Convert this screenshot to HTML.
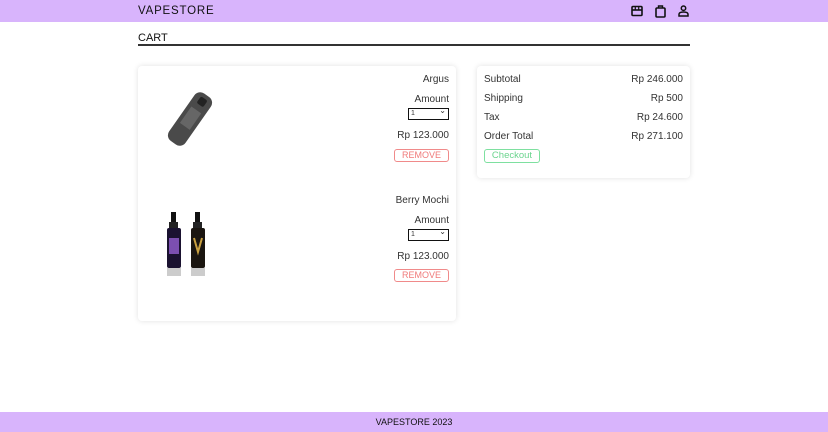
<!DOCTYPE html>
<html><head><style>
*{margin:0;padding:0;box-sizing:border-box}
body{width:828px;height:432px;background:#fff;font-family:"Liberation Sans",sans-serif;color:#333;position:relative;overflow:hidden;font-size:10px}
.hdr{position:absolute;left:0;top:0;width:828px;height:22px;background:#d8b4fc}
.logo{position:absolute;left:138px;top:5px;font-size:11.5px;letter-spacing:.8px;color:#111}
.ic{position:absolute;top:5px}
.cart{position:absolute;left:138px;top:32px;font-size:11px;color:#111}
.line{position:absolute;left:138px;top:44px;width:552px;height:1.5px;background:#333}
.card{position:absolute;background:#fff;border-radius:4px;box-shadow:0 0 6px rgba(0,0,0,.12)}
.r{position:absolute;right:7px;text-align:right}
.sel{position:absolute;right:7px;width:41px;height:12px;border:1px solid #111;font-size:7px;padding-left:2px;line-height:10px}
.sel:after{content:"⌄";position:absolute;right:2px;top:-3px;font-size:8px}
.rm{position:absolute;right:7px;width:55px;height:13px;border:1px solid #f08a8a;border-radius:3px;color:#f07a7a;font-size:9px;text-align:center;line-height:11px}
.row{position:absolute;left:7px;right:7px;display:flex;justify-content:space-between}
.co{position:absolute;left:7px;top:83px;width:56px;height:14px;border:1px solid #7ee0a0;border-radius:3px;color:#6bd48e;font-size:9.5px;text-align:center;line-height:12px}
.ftr{position:absolute;left:0;top:412px;width:828px;height:20px;background:#d8b4fc;text-align:center;font-size:9px;line-height:20px;color:#111}
</style></head><body>
<div class="hdr">
<div class="logo">VAPESTORE</div>
<svg class="ic" style="left:631px" width="12" height="12" viewBox="0 0 12 12"><rect x="1" y="1.5" width="10" height="9" rx="1" fill="none" stroke="#111" stroke-width="1.6"/><line x1="1" y1="5" x2="11" y2="5" stroke="#111" stroke-width="1.6"/><line x1="4.3" y1="1.5" x2="4.3" y2="5" stroke="#111" stroke-width="1.2"/><line x1="7.7" y1="1.5" x2="7.7" y2="5" stroke="#111" stroke-width="1.2"/></svg>
<svg class="ic" style="left:655px" width="11" height="13" viewBox="0 0 11 13"><rect x="1" y="3" width="9" height="9" rx="1" fill="none" stroke="#111" stroke-width="1.6"/><path d="M3.5 3V1h4v2" fill="none" stroke="#111" stroke-width="1.4"/></svg>
<svg class="ic" style="left:678px" width="11" height="12" viewBox="0 0 11 12"><circle cx="5.5" cy="3.2" r="2.2" fill="none" stroke="#111" stroke-width="1.5"/><path d="M1 11V9.3Q1 7 5.5 7T10 9.3V11Z" fill="none" stroke="#111" stroke-width="1.5"/></svg>
</div>
<div class="cart">CART</div><div class="line"></div>
<div class="card" style="left:138px;top:66px;width:318px;height:255px">
<svg style="position:absolute;left:24px;top:22px" width="56" height="62" viewBox="0 0 56 62"><g transform="rotate(35 28 31)"><rect x="18" y="2" width="20" height="58" rx="7" fill="#4a4a4a"/><rect x="22" y="20" width="12" height="20" fill="#666"/><rect x="24" y="6" width="8" height="8" rx="2" fill="#222"/></g></svg>
<div class="r" style="top:8px">Argus</div>
<div class="r" style="top:28px">Amount</div>
<div class="sel" style="top:42px">1</div>
<div class="r" style="top:64px">Rp 123.000</div>
<div class="rm" style="top:83px">REMOVE</div>
<svg style="position:absolute;left:27px;top:146px" width="48" height="66" viewBox="0 0 48 66"><rect x="6" y="0" width="5" height="10" fill="#111"/><rect x="4" y="10" width="9" height="6" fill="#222"/><rect x="2" y="16" width="14" height="40" rx="2" fill="#1a1230"/><rect x="4" y="26" width="10" height="16" fill="#7b4fb0"/><rect x="2" y="56" width="14" height="8" fill="#ccc"/><rect x="30" y="0" width="5" height="10" fill="#111"/><rect x="28" y="10" width="9" height="6" fill="#222"/><rect x="26" y="16" width="14" height="40" rx="2" fill="#1a1510"/><path d="M29 26l4 14 4-14" stroke="#c9a040" stroke-width="2" fill="none"/><rect x="26" y="56" width="14" height="8" fill="#ccc"/></svg>
<div class="r" style="top:129px">Berry Mochi</div>
<div class="r" style="top:149px">Amount</div>
<div class="sel" style="top:163px">1</div>
<div class="r" style="top:185px">Rp 123.000</div>
<div class="rm" style="top:203px">REMOVE</div>
</div>
<div class="card" style="left:477px;top:66px;width:213px;height:112px">
<div class="row" style="top:8px"><span>Subtotal</span><span>Rp 246.000</span></div>
<div class="row" style="top:27px"><span>Shipping</span><span>Rp 500</span></div>
<div class="row" style="top:46px"><span>Tax</span><span>Rp 24.600</span></div>
<div class="row" style="top:65px"><span>Order Total</span><span>Rp 271.100</span></div>
<div class="co">Checkout</div>
</div>
<div class="ftr">VAPESTORE 2023</div>
</body></html>
